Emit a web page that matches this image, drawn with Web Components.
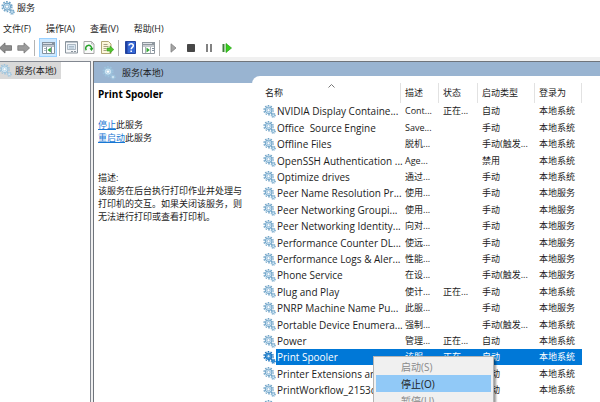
<!DOCTYPE html>
<html lang="zh-CN">
<head>
<meta charset="utf-8">
<title>服务</title>
<style>
html, body { height: 100%; margin: 0; }
body {
  font: 9px/13px "Open Sans", "Noto Sans CJK SC", sans-serif;
  color: #1c1c1c;
  background: #fff;
  overflow: hidden;
}
</style>
</head>
<body>
<mmc-window>
  <title-bar slot="title">服务</title-bar>
  <menu-bar slot="menu"></menu-bar>
  <tool-bar slot="tools"></tool-bar>
  <tree-pane slot="tree">服务(本地)</tree-pane>
  <detail-pane slot="detail">
    <span slot="caption">服务(本地)</span>
    <service-summary slot="summary" name="Print Spooler">该服务在后台执行打印作业并处理与打印机的交互。如果关闭该服务，则无法进行打印或查看打印机。</service-summary>
    <service-list slot="list"></service-list>
  </detail-pane>
  <context-menu slot="popup"></context-menu>
</mmc-window>

<script>
function define(name, html, setup) {
  const template = document.createElement('template');
  template.innerHTML = html;
  customElements.define(name, class extends HTMLElement {
    constructor() {
      super();
      this.attachShadow({ mode: 'open' }).append(template.content.cloneNode(true));
    }
    connectedCallback() {
      if (setup && !this.ready) { this.ready = true; setup(this.shadowRoot, this); }
    }
  });
}

define('gear-icon', `
<style>
  :host { display: inline-block; width: 14px; height: 14px; flex: none; white-space: normal; --rim: #6fa3c7; --face: #cfe6f5; --hub: #fff; }
  :host([pale]) { --rim: #9cc3dd; --face: #d9ecf7; }
  :host([active]) { --rim: #1470bd; --face: #3d97dc; --hub: #d8ecfb; }
  svg { display: block; width: 100%; height: 100%; }
</style>
<svg viewBox="0 0 14 14" aria-hidden="true">
  <circle cx="6" cy="5.6" r="4.9" fill="none" stroke="var(--rim)" stroke-width="1.4" stroke-dasharray="1.7 1.38"/>
  <circle cx="6" cy="5.6" r="3.5" fill="var(--face)" stroke="var(--rim)" stroke-width="1.1"/>
  <circle cx="6" cy="5.6" r="1.7" fill="var(--hub)" stroke="var(--rim)" stroke-width=".7"/>
  <circle cx="11" cy="11" r="2.2" fill="none" stroke="var(--rim)" stroke-width="1.1" stroke-dasharray="1 .73"/>
  <circle cx="11" cy="11" r="1.5" fill="var(--face)" stroke="var(--rim)" stroke-width=".8"/>
</svg>`);

define('mmc-window', `
<style>
  :host { display: flex; flex-direction: column; height: 100vh; position: relative; overflow: hidden; background: #fff; }
  .body { flex: 1; min-height: 0; display: flex; gap: 2px; background: #f0f0f0; padding-top: 4px; }
  slot[name=tree]::slotted(*) { flex: none; }
  slot[name=detail]::slotted(*) { flex: 1; min-width: 0; }
</style>
<slot name="title"></slot>
<slot name="menu"></slot>
<slot name="tools"></slot>
<div class="body"><slot name="tree"></slot><slot name="detail"></slot></div>
<slot name="popup"></slot>`);

define('title-bar', `
<style>
  :host { display: flex; align-items: center; gap: 2px; height: 15px; padding: 0 0 4px 1px; }
</style>
<gear-icon></gear-icon><slot></slot>`);

define('menu-bar', `
<style>
  :host { display: block; }
  nav { display: flex; gap: 15px; height: 19px; padding-left: 3px; }
  button { all: unset; color: #1c1c1c; }
</style>
<nav></nav>`, root => {
  const nav = root.querySelector('nav');
  for (const label of ['文件(F)', '操作(A)', '查看(V)', '帮助(H)']) {
    const b = document.createElement('button');
    b.textContent = label;
    nav.append(b);
  }
});

define('tool-bar', `
<style>
  :host { display: flex; align-items: center; height: 19px; }
  button { all: unset; box-sizing: border-box; width: 18px; height: 19px; display: flex; align-items: center; justify-content: center; }
  button.edge { width: 14px; justify-content: flex-start; }
  button.on { background: #cce8ff; border: 1px solid #99d1ff; }
  svg { display: block; }
  i { width: 1px; height: 16px; margin: 0 2px; background: #b4b4b4; }
  .group { display: flex; }
  .wide { padding-left: 2px; }
</style>
<div class="group">
  <button class="edge" aria-label="后退"><svg width="12" height="12"><path d="M-.5 6 5 .9V3.700h6.500v4.600H5v2.800z" fill="#8d8d8d" stroke="#6b6b6b" stroke-width=".8"/></svg></button>
  <button aria-label="前进"><svg width="13" height="12"><path d="M12.500 6 7 .9V3.700H.8v4.600H7v2.800z" fill="#9b9b9b" stroke="#777" stroke-width=".8"/></svg></button>
</div>
<i></i>
<div class="group wide">
  <button class="on" aria-label="显示/隐藏控制台树"><svg width="13" height="12"><path d="M.5.500h12v11H.5z" fill="#fff" stroke="#8593a0"/><path d="M0 0h13v3.500H0z" fill="#8593a0"/><path d="M1 1h9v1H1z" fill="#d8dfe5"/><path d="M1 4.500h11" stroke="#b7c0c8"/><path d="M4.500 5v6M9.500 5v6" stroke="#8593a0"/><path d="M2 6.500h2M2 8.500h2" stroke="#a9b7c3"/><path d="M8.800 5.500v5L5.500 8z" fill="#35a835"/></svg></button>
</div>
<i></i>
<div class="group">
  <button aria-label="属性"><svg width="13" height="13"><path d="M.5.500h12v11.500H.5z" fill="#f5f7f9" stroke="#8a949d"/><path d="M1 1.500h11" stroke="#b9c2ca"/><path d="M2.500 3.500h8v5h-8z" fill="#dce8f2" stroke="#9aa9b6" stroke-width=".8"/><path d="M4 5.500h5M4 7h5" stroke="#9db0c0" stroke-width=".8"/><path d="M6 10.500h2M9 10.500h2" stroke="#8a949d"/></svg></button>
  <button aria-label="刷新"><svg width="12" height="13"><path d="M1 .5h7.500l2.500 2.500v9.500H1z" fill="#fafafa" stroke="#a7a7a7"/><path d="M8.500.5V3H11" fill="none" stroke="#b0b0b0" stroke-width=".8"/><path d="M3.300 9.200A3 3 0 1 1 8.600 8" fill="none" stroke="#25a329" stroke-width="1.500"/><path d="M10.500 6.800 8.600 10 6.500 7.500z" fill="#25a329"/></svg></button>
  <button aria-label="导出列表"><svg width="13" height="13"><path d="M.5.500h7l2.500 2.500v9.500H.5z" fill="#fdf7dc" stroke="#b3a777"/><path d="M2.500 3.500h4M2.500 5.500h5M2.500 7.500h3M2.500 9.500h3" stroke="#938b6d" stroke-width=".8"/><path d="M6 7h3V4.900L12.800 8.500 9 12V10H6z" fill="#52c52d" stroke="#38981e" stroke-width=".6"/></svg></button>
</div>
<i></i>
<div class="group">
  <button aria-label="帮助"><svg width="11" height="13"><path d="M.5.500h10v12H.5z" fill="#3567d6" stroke="#2445a0"/><path d="M1 1h1.500v11H1z" fill="#1f3f9e"/><path d="M4 4.600C4 2.200 8.300 2.200 8.300 4.700 8.300 6.500 6.200 6.300 6.200 8.300" fill="none" stroke="#fff" stroke-width="1.500"/><path d="M5.400 9.400H7V11H5.400z" fill="#fff"/></svg></button>
  <button aria-label="显示/隐藏操作窗格"><svg width="13" height="12"><path d="M.5.500h12v11H.5z" fill="#fff" stroke="#8f979e"/><path d="M0 0h13v3.500H0z" fill="#8f979e"/><path d="M1 1h9v1H1z" fill="#dfe3e6"/><path d="M1 4.500h11" stroke="#c4c9cd"/><path d="M3.500 5v6M8.500 5v6" stroke="#a9b0b6"/><path d="M10 6.500h2M10 8.500h2" stroke="#7d8d9b"/><path d="M4.500 5.500v5L7.800 8z" fill="#35a835"/></svg></button>
</div>
<i></i>
<div class="group wide">
  <button aria-label="启动服务"><svg width="7" height="10"><path d="M1 .8 6 5 1 9.200z" fill="#a5a5a5" stroke="#808080" stroke-width=".8"/></svg></button>
  <button aria-label="停止服务"><svg width="8" height="8"><rect width="8" height="8" rx=".8" fill="#474747"/></svg></button>
  <button aria-label="暂停服务"><svg width="8" height="8"><path d="M1 0h2v8H1zM5 0h2v8H5z" fill="#828282"/></svg></button>
  <button aria-label="重新启动服务"><svg width="10" height="10"><path d="M.5 1h2v8h-2z" fill="#3f7f3a"/><path d="M4 .5 9.500 5 4 9.500z" fill="#37d01c" stroke="#21a010" stroke-width=".7"/></svg></button>
</div>`);

define('tree-pane', `
<style>
  :host { display: block; box-sizing: border-box; width: 91px; background: #fff; border: solid #828790; border-width: 1px 1px 0 0; }
  .node { display: inline-flex; align-items: center; gap: 3px; height: 17px; padding-right: 5px; background: #d9d9d9; }
  gear-icon { margin-left: -1px; width: 13px; height: 13px; }
</style>
<div class="node"><gear-icon pale></gear-icon><slot></slot></div>`);

define('detail-pane', `
<style>
  :host { display: flex; flex-direction: column; background: #99b4d1; border: solid #6f747b; border-width: 1px 0 0 1px; }
  header { display: flex; align-items: center; gap: 6px; height: 21px; padding-left: 8px; }
  .content { flex: 1; min-height: 0; display: flex; background: #fff; }
  .content slot[name=summary]::slotted(*) { flex: none; width: 158px; }
  .content slot[name=list]::slotted(*) { flex: 1; min-width: 0; margin-top: -7px; }
</style>
<header><gear-icon pale></gear-icon><slot name="caption"></slot></header>
<div class="content"><slot name="summary"></slot><slot name="list"></slot></div>`);

define('service-summary', `
<style>
  :host { display: block; box-sizing: border-box; padding: 5px 6px 0 4px; }
  h1 { margin: 0; font-size: 10px; line-height: 13px; color: #000; }
  ul { list-style: none; margin: 17px 0 27px; padding: 0; }
  a { color: #1878d4; text-decoration: underline; }
  p { margin: 0; }
</style>
<h1></h1>
<ul><li><a href="#stop">停止</a>此服务</li><li><a href="#restart">重启动</a>此服务</li></ul>
<p>描述:</p>
<p><slot></slot></p>`, (root, host) => {
  root.querySelector('h1').textContent = host.getAttribute('name');
});

const SERVICES = [
  ['NVIDIA Display Containe...', 'Cont...', '正在...', '自动', '本地系统'],
  ['Office  Source Engine', 'Save...', '', '手动', '本地系统'],
  ['Offline Files', '脱机...', '', '手动(触发...', '本地系统'],
  ['OpenSSH Authentication ...', 'Age...', '', '禁用', '本地系统'],
  ['Optimize drives', '通过...', '', '手动', '本地系统'],
  ['Peer Name Resolution Pr...', '使用...', '', '手动', '本地服务'],
  ['Peer Networking Groupi...', '使用...', '', '手动', '本地服务'],
  ['Peer Networking Identity...', '向对...', '', '手动', '本地服务'],
  ['Performance Counter DL...', '使远...', '', '手动', '本地服务'],
  ['Performance Logs & Aler...', '性能...', '', '手动', '本地服务'],
  ['Phone Service', '在设...', '', '手动(触发...', '本地服务'],
  ['Plug and Play', '使计...', '正在...', '手动', '本地系统'],
  ['PNRP Machine Name Pu...', '此服...', '', '手动', '本地服务'],
  ['Portable Device Enumera...', '强制...', '', '手动(触发...', '本地系统'],
  ['Power', '管理...', '正在...', '自动', '本地系统'],
  ['Print Spooler', '该服...', '正在...', '自动', '本地系统'],
  ['Printer Extensions and ...', '此服...', '', '手动', '本地系统'],
  ['PrintWorkflow_2153c3...', '为打...', '', '手动', '本地系统'],
  ['', '', '', '', '']
];

define('service-list', `
<style>
  :host { display: block; background: #fff; border-top-left-radius: 8px; padding: 7px 0 0 11px; overflow: hidden; }
  table { table-layout: fixed; width: 319px; border-collapse: separate; border-spacing: 0; }
  th, td { padding: 0 0 0 4px; text-align: left; font-weight: normal; white-space: pre; line-height: 16px; }
  th { height: 20px; border-right: 1px solid #e2e2e2; position: relative; }
  th:first-child { padding-left: 2px; }
  th svg { position: absolute; left: 65px; top: 1px; }
  td.icon { padding: 0; }
  td.name { padding-left: 1px; font-size: 10px; }
  gear-icon { display: block; width: 13px; height: 13px; }
  tbody tr { height: 16px; }
  tbody tr:nth-child(5n+2), tbody tr:nth-child(5n+4) { height: 17px; }
  tr.selected td:not(.icon) { background: #0078d7; color: #fff; }
</style>
<table>
  <colgroup><col style="width:13px"><col style="width:125px"><col style="width:38px"><col style="width:39px"><col style="width:57px"><col style="width:47px"></colgroup>
  <thead><tr>
    <th colspan="2">名称<svg width="7" height="4" aria-hidden="true"><path d="M.5 3.500 3.500.5l3 3" fill="none" stroke="#777"/></svg></th>
    <th>描述</th><th>状态</th><th>启动类型</th><th>登录为</th>
  </tr></thead>
  <tbody></tbody>
</table>`, root => {
  const body = root.querySelector('tbody');
  for (const service of SERVICES) {
    const row = body.insertRow();
    const selected = service[0] === 'Print Spooler';
    row.classList.toggle('selected', selected);
    const iconCell = row.insertCell();
    iconCell.className = 'icon';
    const icon = document.createElement('gear-icon');
    icon.toggleAttribute('active', selected);
    iconCell.append(icon);
    service.forEach((text, i) => {
      const cell = row.insertCell();
      cell.textContent = text;
      if (i === 0) cell.className = 'name';
    });
  }
});

define('context-menu', `
<style>
  :host { position: absolute; left: 373px; top: 356px; width: 121px; box-sizing: border-box; padding: 1px 2px; background: #f0f0f0; border: 1px solid #b4b4b4; box-shadow: 2px 2px 2px #0006; }
  button { all: unset; display: block; box-sizing: border-box; width: 100%; height: 17px; line-height: 16px; padding-left: 25px; font-size: 10px; color: #1c1c1c; }
  button:disabled { color: #8a8a8a; }
  button.hot { background: #91c9f7; }
</style>
<button disabled>启动(S)</button>
<button class="hot">停止(O)</button>
<button disabled>暂停(U)</button>`);
</script>
</body>
</html>
